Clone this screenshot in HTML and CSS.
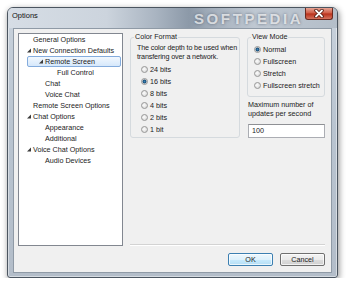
FILE: index.html
```html
<!DOCTYPE html>
<html lang="en">
<head>
    <meta charset="UTF-8">
    <title>Options</title>
    <link rel="stylesheet" href="styles.css">
</head>
<body>
    <div class="window">
        <div class="titlebar">
            <span class="title">Options</span>
            <span class="watermark">SOFTPEDIA</span>
            <button class="close">
                <svg width="12" height="9" viewBox="0 0 12 9">
                    <path d="M3 1.5 L9 7.5 M9 1.5 L3 7.5" stroke="#4a1208" stroke-width="3.4" stroke-linecap="round"/>
                    <path d="M3 1.5 L9 7.5 M9 1.5 L3 7.5" stroke="#fff" stroke-width="1.8" stroke-linecap="round"/>
                </svg>
            </button>
        </div>

        <div class="client">
            <div class="main">
                <div class="tree">
                    <div class="row l1"><span class="arrow"></span>General Options</div>
                    <div class="row l1"><span class="arrow"><svg width="8" height="11"><polygon points="6,3.5 6,7.5 2,7.5" fill="#3a3a3a"/></svg></span>New Connection Defaults</div>
                    <div class="row l2 sel"><span class="arrow"><svg width="8" height="11"><polygon points="6,3.5 6,7.5 2,7.5" fill="#3a3a3a"/></svg></span>Remote Screen</div>
                    <div class="row l3"><span class="arrow"></span>Full Control</div>
                    <div class="row l2"><span class="arrow"></span>Chat</div>
                    <div class="row l2"><span class="arrow"></span>Voice Chat</div>
                    <div class="row l1"><span class="arrow"></span>Remote Screen Options</div>
                    <div class="row l1"><span class="arrow"><svg width="8" height="11"><polygon points="6,3.5 6,7.5 2,7.5" fill="#3a3a3a"/></svg></span>Chat Options</div>
                    <div class="row l2"><span class="arrow"></span>Appearance</div>
                    <div class="row l2"><span class="arrow"></span>Additional</div>
                    <div class="row l1"><span class="arrow"><svg width="8" height="11"><polygon points="6,3.5 6,7.5 2,7.5" fill="#3a3a3a"/></svg></span>Voice Chat Options</div>
                    <div class="row l2"><span class="arrow"></span>Audio Devices</div>
                </div>

                <div class="pane">
                    <div class="groups">
                        <div class="group color-group">
                            <div class="legend">Color Format</div>
                            <p class="desc">The color depth to be used when<br>transfering over a network.</p>
                            <div class="radios">
                                <div class="radio"><span class="dot"></span>24 bits</div>
                                <div class="radio"><span class="dot on"></span>16 bits</div>
                                <div class="radio"><span class="dot"></span>8 bits</div>
                                <div class="radio"><span class="dot"></span>4 bits</div>
                                <div class="radio"><span class="dot"></span>2 bits</div>
                                <div class="radio"><span class="dot"></span>1 bit</div>
                            </div>
                        </div>

                        <div class="view-col">
                            <div class="group view-group">
                                <div class="legend">View Mode</div>
                                <div class="radios">
                                    <div class="radio"><span class="dot on"></span>Normal</div>
                                    <div class="radio"><span class="dot"></span>Fullscreen</div>
                                    <div class="radio"><span class="dot"></span>Stretch</div>
                                    <div class="radio"><span class="dot"></span>Fullscreen stretch</div>
                                </div>
                            </div>
                            <p class="max-label">Maximum number of<br>updates per second</p>
                            <div class="textbox">100</div>
                        </div>
                    </div>
                    <div class="separator"></div>
                </div>
            </div>

            <div class="buttons">
                <button class="btn default">OK</button>
                <button class="btn">Cancel</button>
            </div>
        </div>
    </div>
</body>
</html>
```

FILE: styles.css
```css
body {
    margin: 0;
    background-color: #fff;
    font-family: "Liberation Sans", Arial, sans-serif;
    font-size: 7.2px;
    color: #1b1b1b;
}
.window {
    box-sizing: border-box;
    width: 331px;
    height: 271px;
    margin: 7px 0 0 7px;
    padding: 0 5px 4px;
    border: 1px solid #4b5560;
    border-radius: 6px 6px 3px 3px;
    background: linear-gradient(180deg, #c9d2dc 0%, #b9c4d0 45%, #b3bdc9 100%);
    box-shadow: 1px 2px 6px rgba(0, 0, 0, 0.45), inset 0 0 0 1px rgba(255, 255, 255, 0.45);
    display: flex;
    flex-direction: column;
}
.titlebar {
    position: relative;
    height: 20px;
    margin: 0 -5px;
    padding-left: 4px;
    display: flex;
    align-items: flex-start;
    border-radius: 5px 5px 0 0;
    background: linear-gradient(90deg, #d6dde5 0%, #ccd4dd 30%, #a9b4c1 45%, #8c99a8 55%, #a3aebb 62%, #bfc8d2 75%, #b4bec9 100%);
    overflow: hidden;
}
.title {
    margin-top: 4px;
    line-height: 8px;
    font-size: 7.5px;
    color: #101010;
}
.watermark {
    position: absolute;
    left: 186px;
    top: 2px;
    font-size: 15px;
    font-weight: bold;
    letter-spacing: 2.6px;
    color: rgba(255, 255, 255, 0.7);
    text-shadow: 0 0 3px rgba(90, 100, 115, 0.9);
}
.close {
    position: relative;
    margin-left: auto;
    margin-right: 4px;
    width: 28px;
    height: 12px;
    padding: 0;
    border: 1px solid #6a2a20;
    border-top: none;
    border-radius: 0 0 3px 3px;
    background: linear-gradient(180deg, #e7a595 0%, #cf5a43 48%, #b8301a 52%, #d5735e 100%);
    display: flex;
    align-items: center;
    justify-content: center;
}
.client {
    flex: 1;
    box-sizing: border-box;
    background-color: #f0f0f0;
    border: 1px solid #8f9aa6;
    padding: 4px 6px 6px 4px;
    display: flex;
    flex-direction: column;
}
.main {
    height: 213px;
    display: flex;
    gap: 7px;
}
.tree {
    width: 105px;
    box-sizing: border-box;
    background-color: #fff;
    border: 1px solid #828790;
    padding: 0 0 0 6px;
}
.row {
    box-sizing: border-box;
    height: 11px;
    line-height: 11px;
    display: flex;
    align-items: center;
    white-space: nowrap;
}
.row.l2 {
    padding-left: 12px;
}
.row.l3 {
    padding-left: 24px;
}
.row.sel {
    margin: 0 1px 0 2px;
    padding-left: 9px;
    border: 1px solid #84acdd;
    border-radius: 2px;
    background: linear-gradient(180deg, #f2f8fe, #d6e8fb);
}
.arrow {
    width: 8px;
    height: 11px;
    flex-shrink: 0;
}
.arrow svg {
    display: block;
}
.pane {
    flex: 1;
    display: flex;
    flex-direction: column;
}
.groups {
    display: flex;
    gap: 7px;
    padding-top: 4px;
}
.group {
    border: 1px solid #d5dade;
    border-radius: 3px;
    display: flex;
    flex-direction: column;
}
.legend {
    align-self: flex-start;
    margin: -5px 0 0 3px;
    padding: 0 1px;
    line-height: 8px;
    background-color: #f0f0f0;
}
.color-group {
    width: 110px;
    box-sizing: border-box;
}
.desc {
    margin: 2px 0 0 6px;
    line-height: 9px;
    white-space: nowrap;
    letter-spacing: -0.15px;
}
.radios {
    margin-top: 2px;
}
.radio {
    height: 12px;
    display: flex;
    align-items: center;
    gap: 2px;
    padding-left: 10px;
    white-space: nowrap;
}
.view-group .radio {
    padding-left: 6px;
}
.view-group {
    padding-bottom: 5px;
}
.dot {
    box-sizing: border-box;
    width: 7px;
    height: 7px;
    border-radius: 50%;
    border: 1px solid #979797;
    background: radial-gradient(circle at 40% 40%, #fdfdfd 0%, #e2e2e2 60%, #cfcfcf 100%);
}
.dot.on {
    background: radial-gradient(circle, #3f86b8 0, #164d78 1.6px, #d8d8d8 2.3px, #f4f4f4 100%);
}
.view-col {
    flex: 1;
    display: flex;
    flex-direction: column;
}
.max-label {
    margin: 3px 0 0 1px;
    line-height: 9px;
}
.textbox {
    box-sizing: border-box;
    height: 14px;
    margin: 6px 0 0 1px;
    padding-left: 3px;
    line-height: 12px;
    background-color: #fff;
    border: 1px solid #abadb3;
    border-top-color: #8e9094;
}
.separator {
    margin-top: auto;
    border-top: 1px solid #d3d3d3;
    border-bottom: 1px solid #fff;
}
.buttons {
    display: flex;
    justify-content: flex-end;
    gap: 7px;
    margin-top: 7px;
}
.btn {
    width: 45px;
    height: 13px;
    padding: 0;
    font: inherit;
    color: #1b1b1b;
    border: 1px solid #707070;
    border-radius: 2px;
    background: linear-gradient(180deg, #f3f3f3 0%, #ebebeb 50%, #dddddd 51%, #d0d0d0 100%);
    box-shadow: inset 0 0 0 1px rgba(255, 255, 255, 0.7);
}
.btn.default {
    border-color: #3c7fb1;
    background: linear-gradient(180deg, #edf7fd 0%, #def1fc 50%, #c8eafd 51%, #b4def5 100%);
}
```
